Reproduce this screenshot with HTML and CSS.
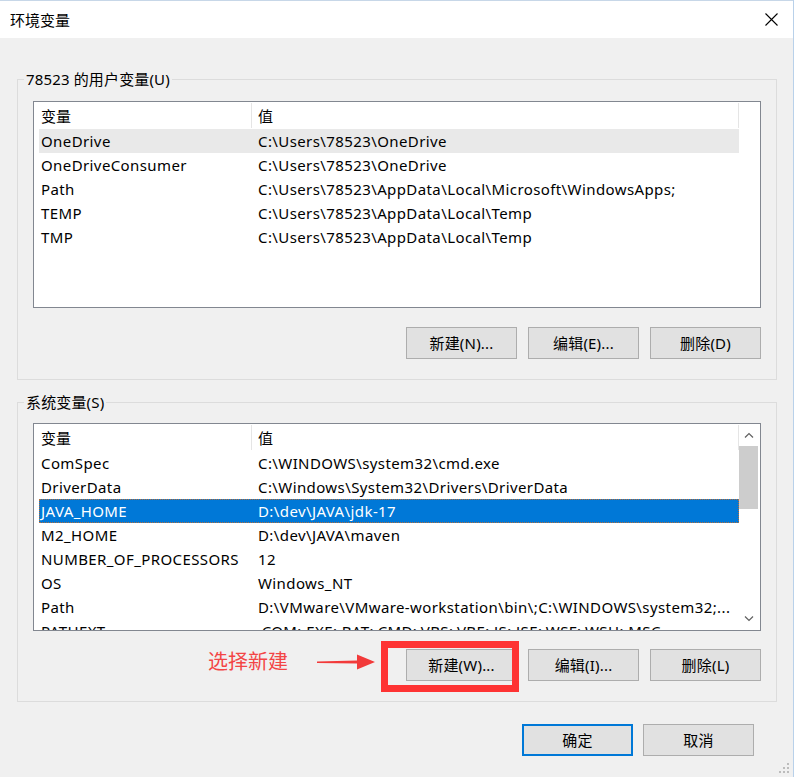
FILE: index.html
```html
<!DOCTYPE html>
<html lang="zh-CN">
<head>
<meta charset="utf-8">
<title>环境变量</title>
<link rel="stylesheet" href="styles.css">
</head>
<body>
<div class="window">
  <div class="titlebar">
    <span class="title">环境变量</span>
    <svg class="close" width="13" height="13" viewBox="0 0 13 13"><path d="M0.5 0.5 L12.5 12.5 M12.5 0.5 L0.5 12.5" stroke="#000" stroke-width="1.1" fill="none"/></svg>
  </div>
  <div class="body">
    <fieldset class="group g1">
      <legend>78523 的用户变量(U)</legend>
      <div class="gbody">
        <div class="list l1">
          <div class="lv">
            <div class="row head"><span class="c1">变量</span><span class="c2">值</span></div>
            <div class="row hover"><span class="c1">OneDrive</span><span class="c2">C:\Users\78523\OneDrive</span></div>
            <div class="row"><span class="c1">OneDriveConsumer</span><span class="c2">C:\Users\78523\OneDrive</span></div>
            <div class="row"><span class="c1">Path</span><span class="c2">C:\Users\78523\AppData\Local\Microsoft\WindowsApps;</span></div>
            <div class="row"><span class="c1">TEMP</span><span class="c2">C:\Users\78523\AppData\Local\Temp</span></div>
            <div class="row"><span class="c1">TMP</span><span class="c2">C:\Users\78523\AppData\Local\Temp</span></div>
          </div>
        </div>
        <div class="btns">
          <button class="btn">新建(N)...</button>
          <button class="btn">编辑(E)...</button>
          <button class="btn">删除(D)</button>
        </div>
      </div>
    </fieldset>

    <fieldset class="group g2">
      <legend>系统变量(S)</legend>
      <div class="gbody">
        <div class="list l2">
          <div class="lv">
            <div class="row head"><span class="c1">变量</span><span class="c2">值</span></div>
            <div class="row"><span class="c1">ComSpec</span><span class="c2">C:\WINDOWS\system32\cmd.exe</span></div>
            <div class="row"><span class="c1">DriverData</span><span class="c2">C:\Windows\System32\Drivers\DriverData</span></div>
            <div class="row selected"><span class="c1">JAVA_HOME</span><span class="c2">D:\dev\JAVA\jdk-17</span></div>
            <div class="row"><span class="c1">M2_HOME</span><span class="c2">D:\dev\JAVA\maven</span></div>
            <div class="row"><span class="c1">NUMBER_OF_PROCESSORS</span><span class="c2">12</span></div>
            <div class="row"><span class="c1">OS</span><span class="c2">Windows_NT</span></div>
            <div class="row"><span class="c1">Path</span><span class="c2">D:\VMware\VMware-workstation\bin\;C:\WINDOWS\system32;...</span></div>
            <div class="row"><span class="c1">PATHEXT</span><span class="c2">.COM;.EXE;.BAT;.CMD;.VBS;.VBE;.JS;.JSE;.WSF;.WSH;.MSC</span></div>
          </div>
          <div class="sb">
            <div class="sb-arrow">
              <svg width="10" height="6" viewBox="0 0 10 6"><path d="M1 5.5 L5 1.5 L9 5.5" stroke="#606060" stroke-width="1.2" fill="none"/></svg>
            </div>
            <div class="sb-thumb"></div>
            <div class="sb-track"></div>
            <div class="sb-arrow">
              <svg width="10" height="6" viewBox="0 0 10 6"><path d="M1 0.5 L5 4.5 L9 0.5" stroke="#606060" stroke-width="1.2" fill="none"/></svg>
            </div>
          </div>
        </div>
        <div class="btns">
          <button class="btn">新建(W)...</button>
          <button class="btn">编辑(I)...</button>
          <button class="btn">删除(L)</button>
        </div>
      </div>
    </fieldset>

    <div class="footer">
      <button class="btn primary">确定</button>
      <button class="btn">取消</button>
    </div>
  </div>

  <div class="annot-text">选择新建</div>
  <svg class="annot-arrow" width="60" height="20" viewBox="0 0 60 20"><polygon points="0,8.6 40,7.6 40,1.5 58,9 40,16.5 40,10.6 0,10" fill="#f23a3a"/></svg>
  <div class="annot-box"></div>

  <div class="grip">
    <i style="left:8px;top:0"></i>
    <i style="left:4px;top:4px"></i><i style="left:8px;top:4px"></i>
    <i style="left:0;top:8px"></i><i style="left:4px;top:8px"></i><i style="left:8px;top:8px"></i>
  </div>
</div>
</body>
</html>
```

FILE: styles.css
```css
* { box-sizing: border-box; }
html, body { margin: 0; padding: 0; }
body {
  width: 794px;
  height: 777px;
  overflow: hidden;
  background: #f0f0f0;
  font-family: "Noto Sans", "Noto Sans CJK SC", sans-serif;
  font-size: 15px;
  color: #000;
}
.window {
  position: relative;
  width: 794px;
  height: 777px;
  background: #f0f0f0;
  border-right: 1px solid #b9d1ea;
}
.titlebar {
  height: 38px;
  background: #fff;
  display: flex;
  align-items: center;
  justify-content: space-between;
  padding: 0 15px 0 10px;
  border-top: 1px solid #c7d7e8;
}
.title { font-size: 15px; line-height: 20px; }
.close { display: block; }

.body { padding: 0 16px 0 17px; }

.group {
  margin: 0;
  padding: 0;
  border: 1px solid #dcdcdc;
  min-width: 0;
}
.group legend {
  margin-left: 6px;
  padding: 0 2px;
  line-height: 20px;
  height: 20px;
  font-size: 15px;
  letter-spacing: 0.15px;
}
.g1 { margin-top: 31px; }
.g2 { margin-top: 12px; }
.g1 .gbody { padding: 12px 15px 20px 15px; }
.g2 .gbody { padding: 11px 15px 20px 15px; }

.list {
  background: #fff;
  border: 1px solid #828790;
  display: flex;
  overflow: hidden;
}
.l1 { height: 207px; }
.l2 { height: 208px; }
.lv {
  flex: 1;
  min-width: 0;
  overflow: hidden;
  padding-left: 5px;
}
.row {
  display: flex;
  align-items: center;
  height: 24px;
  line-height: 22px;
  white-space: nowrap;
  width: 700px;
  letter-spacing: 0.4px;
}
.row .c1 {
  flex: 0 0 213px;
  padding-left: 2px;
  overflow: hidden;
}
.row .c2 {
  flex: 0 0 487px;
  padding-left: 6px;
  overflow: hidden;
}
.row.head {
  height: 27px;
  align-items: stretch;
  padding: 1px 0 1px;
  letter-spacing: 0;
}
.row.head .c1, .row.head .c2 {
  display: flex;
  align-items: center;
  border-right: 1px solid #e5e5e5;
}
.row.hover { background: #e9e9e9; }
.row.selected {
  background: #0078d7;
  color: #fff;
  outline: 1px dotted #b46e3c;
  outline-offset: -1px;
}

.sb {
  flex: 0 0 21px;
  display: flex;
  flex-direction: column;
  background: #fff;
  padding-right: 2px;
}
.sb-arrow {
  height: 22px;
  display: flex;
  align-items: center;
  justify-content: center;
}
.sb-thumb {
  height: 63px;
  background: #cdcdcd;
}
.sb-track { flex: 1; }

.btns {
  display: flex;
  justify-content: flex-end;
  gap: 11px;
}
.g1 .btns { margin-top: 19px; }
.g2 .btns { margin-top: 18px; }
.btn {
  width: 111px;
  height: 32px;
  background: #e1e1e1;
  border: 1px solid #adadad;
  font-family: "Noto Sans", "Noto Sans CJK SC", sans-serif;
  font-size: 15px;
  letter-spacing: 0.2px;
  color: #000;
  padding: 0;
  margin: 0;
  line-height: 20px;
}
.btn.primary { border: 2px solid #0078d7; }

.footer {
  display: flex;
  justify-content: flex-end;
  gap: 10px;
  margin-top: 22px;
  padding-right: 23px;
}

.annot-text {
  position: absolute;
  left: 208px;
  top: 649px;
  font-family: "Noto Sans CJK SC", sans-serif;
  font-size: 20px;
  line-height: 24px;
  color: #f34545;
}
.annot-arrow {
  position: absolute;
  left: 317px;
  top: 653px;
}
.annot-box {
  position: absolute;
  left: 381px;
  top: 641px;
  width: 138px;
  height: 51px;
  border: 7px solid #fe3333;
}
.grip {
  position: absolute;
  right: 4px;
  bottom: 4px;
  width: 10px;
  height: 10px;
}
.grip i {
  position: absolute;
  width: 2px;
  height: 2px;
  background: #bcbcbc;
}
```
